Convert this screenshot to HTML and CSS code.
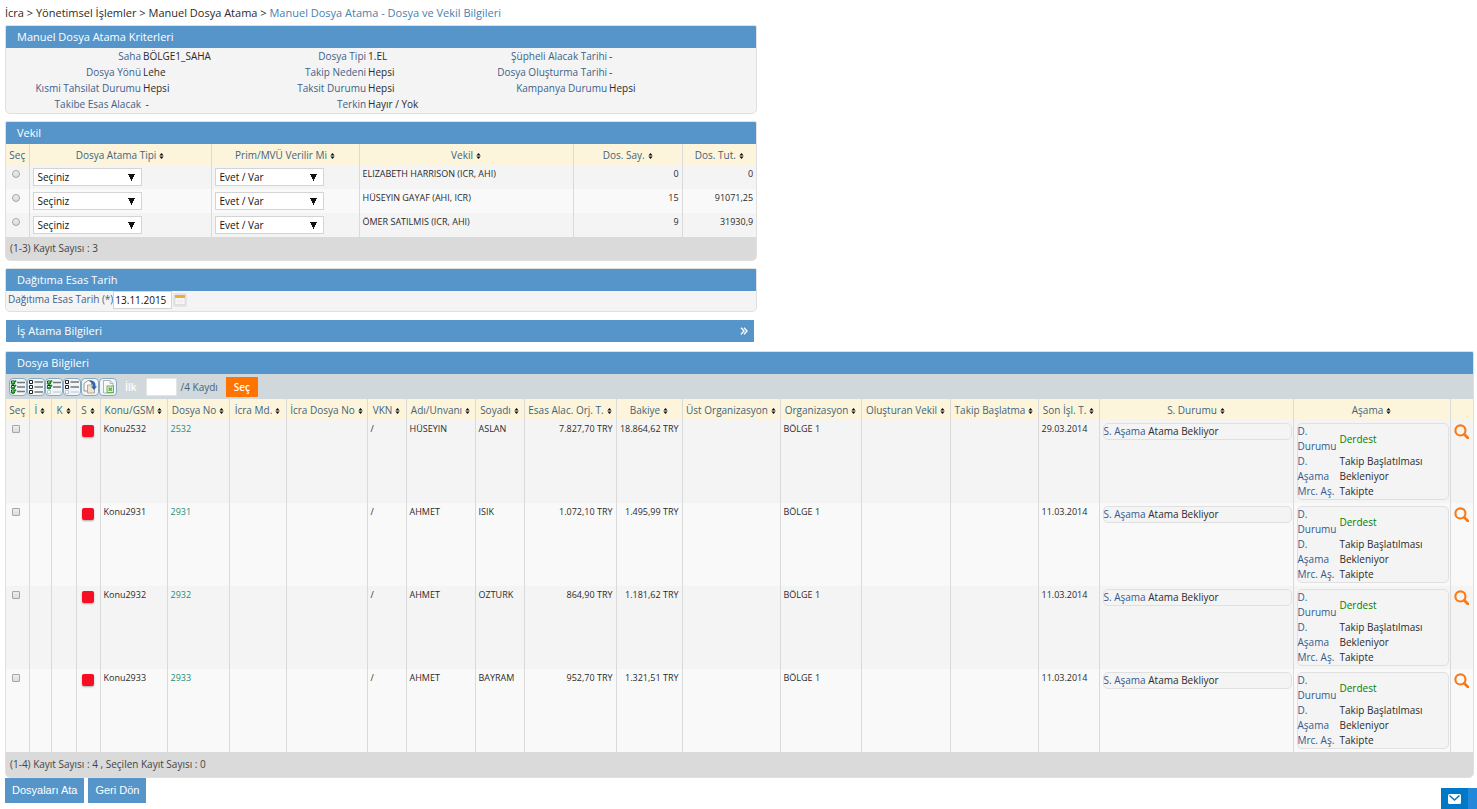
FILE: index.html
```html
<!DOCTYPE html>
<html lang="tr">
<head>
<meta charset="utf-8">
<title>Manuel Dosya Atama</title>
<link rel="stylesheet" href="styles.css">
</head>
<body>
<svg class="sprites" aria-hidden="true">
  <symbol id="sort" viewBox="0 0 5 7"><path d="M2.500 0L5 3H0zM2.500 7L0 4h5z"/></symbol>
  <symbol id="search" viewBox="0 0 14 14"><circle cx="6" cy="6" r="4.700" fill="none" stroke="#f97a16" stroke-width="2"/><path d="M9.500 9.500l3.500 3.500" stroke="#f97a16" stroke-width="2.600" stroke-linecap="round"/></symbol>
</svg>

<nav class="breadcrumb"><a href="#">İcra</a> &gt; <a href="#">Yönetimsel İşlemler</a> &gt; <a href="#">Manuel Dosya Atama</a> &gt; <a href="#" class="current">Manuel Dosya Atama - Dosya ve Vekil Bilgileri</a></nav>

<main>
<section class="panel narrow">
  <h2>Manuel Dosya Atama Kriterleri</h2>
  <dl class="criteria">
    <dt>Saha</dt><dd>BÖLGE1_SAHA</dd><dt>Dosya Tipi</dt><dd>1.EL</dd><dt>Şüpheli Alacak Tarihi</dt><dd>-</dd>
    <dt>Dosya Yönü</dt><dd>Lehe</dd><dt>Takip Nedeni</dt><dd>Hepsi</dd><dt>Dosya Oluşturma Tarihi</dt><dd>-</dd>
    <dt>Kısmi Tahsilat Durumu</dt><dd>Hepsi</dd><dt>Taksit Durumu</dt><dd>Hepsi</dd><dt>Kampanya Durumu</dt><dd>Hepsi</dd>
    <dt>Takibe Esas Alacak</dt><dd>&nbsp;-</dd><dt>Terkin</dt><dd>Hayır / Yok</dd>
  </dl>
</section>

<section class="panel narrow">
  <h2>Vekil</h2>
  <table class="grid lawyers">
    <colgroup><col class="w-pick"><col class="w-type"><col class="w-bonus"><col><col class="w-count"><col class="w-sum"></colgroup>
    <thead><tr>
      <th>Seç</th>
      <th>Dosya Atama Tipi<svg class="sort"><use href="#sort"/></svg></th>
      <th>Prim/MVÜ Verilir Mi<svg class="sort"><use href="#sort"/></svg></th>
      <th>Vekil<svg class="sort"><use href="#sort"/></svg></th>
      <th>Dos. Say.<svg class="sort"><use href="#sort"/></svg></th>
      <th>Dos. Tut.<svg class="sort"><use href="#sort"/></svg></th>
    </tr></thead>
    <tbody>
      <tr><td class="pick"><input type="radio" name="vekil" aria-label="Elizabeth Harrison"></td>
        <td><select aria-label="Dosya Atama Tipi"><option>Seçiniz</option></select></td>
        <td><select aria-label="Prim/MVÜ Verilir Mi"><option>Evet / Var</option></select></td>
        <td>ELIZABETH HARRISON (ICR, AHI)</td><td class="num">0</td><td class="num">0</td></tr>
      <tr><td class="pick"><input type="radio" name="vekil" aria-label="Hüseyin Gayaf"></td>
        <td><select aria-label="Dosya Atama Tipi"><option>Seçiniz</option></select></td>
        <td><select aria-label="Prim/MVÜ Verilir Mi"><option>Evet / Var</option></select></td>
        <td>HÜSEYIN GAYAF (AHI, ICR)</td><td class="num">15</td><td class="num">91071,25</td></tr>
      <tr><td class="pick"><input type="radio" name="vekil" aria-label="Ömer Satilmis"></td>
        <td><select aria-label="Dosya Atama Tipi"><option>Seçiniz</option></select></td>
        <td><select aria-label="Prim/MVÜ Verilir Mi"><option>Evet / Var</option></select></td>
        <td>ÖMER SATILMIS (ICR, AHI)</td><td class="num">9</td><td class="num">31930,9</td></tr>
    </tbody>
  </table>
  <p class="summary">(1-3) Kayıt Sayısı : 3</p>
</section>

<section class="panel narrow">
  <h2>Dağıtıma Esas Tarih</h2>
  <div class="date-row">
    <label for="tarih">Dağıtıma Esas Tarih (*)</label>
    <input id="tarih" type="text" value="13.11.2015">
    <button type="button" class="calendar" aria-label="Takvim"><svg viewBox="0 0 14 14"><rect x="2" y="2.500" width="10" height="9" fill="#f8f8f8" stroke="#d5d5d5" stroke-width=".6"/><rect x="2" y="2" width="10" height="3" fill="#eeaa3a"/><path d="M5 5.500v5.500M7 5.500v5.500M9 5.500v5.500M2.500 8h9" stroke="#e6e6e6" stroke-width=".6"/></svg></button>
  </div>
</section>

<button type="button" class="collapsed"><span>İş Atama Bilgileri</span><svg viewBox="0 0 8 8"><path d="M1 .8L4 4 1 7.200M4 .8L7 4 4 7.200" fill="none" stroke="#fff" stroke-width="1.300"/></svg></button>

<section class="panel">
  <h2>Dosya Bilgileri</h2>
  <div class="toolbar">
    <div class="tools">
      <button type="button" aria-label="Tümünü seç"><svg viewBox="0 0 16 16"><path d="M1.500 2h3v3h-3zM1.500 6.500h3v3h-3zM1.500 11h3v3h-3z" fill="#fff" stroke="#222"/><path d="M1 3.500l2 1.500 3-3.500M1 8l2 1.500 3-3.500M1 12.500l2 1.500 3-3.500" fill="none" stroke="#0f9a1c" stroke-width="1.800"/><path d="M7 3.500h8M7 8h8M7 12.500h8" stroke="#777" stroke-width="1.600"/></svg></button>
      <button type="button" aria-label="Seçimi kaldır"><svg viewBox="0 0 16 16"><path d="M1.500 1.500h3v3h-3zM1.500 6.500h3v3h-3zM1.500 11.500h3v3h-3z" fill="#fff" stroke="#222"/><path d="M6.500 3h8.500M6.500 8h8.500M6.500 13h8.500" stroke="#777" stroke-width="1.600"/></svg></button>
      <button type="button" aria-label="Sayfayı seç"><svg viewBox="0 0 16 16"><path d="M1.500 2h3v3h-3zM1.500 6.500h3v3h-3z" fill="#fff" stroke="#222"/><path d="M1 3.500l2 1.500 3-3.500M1 8l2 1.500 3-3.500" fill="none" stroke="#0f9a1c" stroke-width="1.800"/><path d="M7 3.500h8M7 8h8" stroke="#777" stroke-width="1.600"/><path d="M1.500 11.500h3v3h-3zM7 13h8" fill="#fff" stroke="#b8c8d8"/></svg></button>
      <button type="button" aria-label="Sayfa seçimini kaldır"><svg viewBox="0 0 16 16"><path d="M1.500 1.500h3v3h-3zM1.500 6.500h3v3h-3z" fill="#fff" stroke="#222"/><path d="M6.500 3h8.500M6.500 8h8.500" stroke="#777" stroke-width="1.600"/><path d="M1.500 11.500h3v3h-3zM6.500 13h8.500" fill="#fff" stroke="#b8c8d8"/></svg></button>
      <button type="button" aria-label="Kopyala"><svg viewBox="0 0 16 16"><path d="M2 4.500l4-3h3.500V12H2z" fill="#fafafa" stroke="#888" stroke-width=".9"/><path d="M5.500 6h7v8h-7z" fill="#f1e3c8" stroke="#999" stroke-width=".8"/><path d="M7 2.500c4-2 7 .500 6.500 5H15l-3 3.500L9 7.500h1.700C11 5 10 3.500 7 2.500z" fill="#2f62b5"/></svg></button>
      <button type="button" aria-label="Excel'e aktar"><svg viewBox="0 0 16 16"><path d="M3.500 1.500h6.500l3 3v9.500H3.500z" fill="#fafafa" stroke="#aaa" stroke-width=".9"/><path d="M10 1.500v3h3" fill="none" stroke="#aaa" stroke-width=".8"/><rect x="7" y="7" width="6.500" height="6.500" fill="#dff0d5" stroke="#6cae55"/><path d="M8.700 8.700l3.200 3.200M11.900 8.700l-3.200 3.200" stroke="#5ba542" stroke-width="1.300"/></svg></button>
    </div>
    <label for="ilk" class="first">İlk</label>
    <input id="ilk" type="text">
    <span>/4 Kaydı</span>
    <button type="button" class="pick-btn">Seç</button>
  </div>
  <table class="grid files">
    <colgroup><col class="w-pick"><col class="w-i"><col class="w-k"><col class="w-s"><col class="w-subject"><col class="w-file"><col class="w-office"><col class="w-officeno"><col class="w-vkn"><col class="w-name"><col class="w-surname"><col class="w-principal"><col class="w-balance"><col class="w-parent"><col class="w-org"><col class="w-creator"><col class="w-start"><col class="w-date"><col><col class="w-stage"><col class="w-view"></colgroup>
    <thead><tr>
      <th>Seç</th>
      <th>İ<svg class="sort"><use href="#sort"/></svg></th>
      <th>K<svg class="sort"><use href="#sort"/></svg></th>
      <th>S<svg class="sort"><use href="#sort"/></svg></th>
      <th>Konu/GSM<svg class="sort"><use href="#sort"/></svg></th>
      <th>Dosya No<svg class="sort"><use href="#sort"/></svg></th>
      <th>İcra Md.<svg class="sort"><use href="#sort"/></svg></th>
      <th>İcra Dosya No<svg class="sort"><use href="#sort"/></svg></th>
      <th>VKN<svg class="sort"><use href="#sort"/></svg></th>
      <th>Adı/Unvanı<svg class="sort"><use href="#sort"/></svg></th>
      <th>Soyadı<svg class="sort"><use href="#sort"/></svg></th>
      <th>Esas Alac. Orj. T.<svg class="sort"><use href="#sort"/></svg></th>
      <th>Bakiye<svg class="sort"><use href="#sort"/></svg></th>
      <th>Üst Organizasyon<svg class="sort"><use href="#sort"/></svg></th>
      <th>Organizasyon<svg class="sort"><use href="#sort"/></svg></th>
      <th>Oluşturan Vekil<svg class="sort"><use href="#sort"/></svg></th>
      <th>Takip Başlatma<svg class="sort"><use href="#sort"/></svg></th>
      <th>Son İşl. T.<svg class="sort"><use href="#sort"/></svg></th>
      <th>S. Durumu<svg class="sort"><use href="#sort"/></svg></th>
      <th>Aşama<svg class="sort"><use href="#sort"/></svg></th>
      <th></th>
    </tr></thead>
    <tbody>
      <tr>
        <td class="pick"><input type="checkbox" aria-label="Dosya 2532"></td><td></td><td></td><td><span class="flag"></span></td>
        <td>Konu2532</td><td><a href="#">2532</a></td><td></td><td></td><td>/</td><td>HÜSEYIN</td><td>ASLAN</td>
        <td class="num">7.827,70 TRY</td><td class="num">18.864,62 TRY</td><td></td><td>BÖLGE 1</td><td></td><td></td><td>29.03.2014</td>
        <td class="boxed"><div class="state"><b>S. Aşama</b> Atama Bekliyor</div></td>
        <td class="boxed"><dl class="stage"><dt>D. Durumu</dt><dd class="ok">Derdest</dd><dt>D. Aşama</dt><dd>Takip Başlatılması Bekleniyor</dd><dt class="short">Mrc. Aş.</dt><dd>Takipte</dd></dl></td>
        <td><button type="button" class="view" aria-label="İncele"><svg><use href="#search"/></svg></button></td>
      </tr>
      <tr>
        <td class="pick"><input type="checkbox" aria-label="Dosya 2931"></td><td></td><td></td><td><span class="flag"></span></td>
        <td>Konu2931</td><td><a href="#">2931</a></td><td></td><td></td><td>/</td><td>AHMET</td><td>ISIK</td>
        <td class="num">1.072,10 TRY</td><td class="num">1.495,99 TRY</td><td></td><td>BÖLGE 1</td><td></td><td></td><td>11.03.2014</td>
        <td class="boxed"><div class="state"><b>S. Aşama</b> Atama Bekliyor</div></td>
        <td class="boxed"><dl class="stage"><dt>D. Durumu</dt><dd class="ok">Derdest</dd><dt>D. Aşama</dt><dd>Takip Başlatılması Bekleniyor</dd><dt class="short">Mrc. Aş.</dt><dd>Takipte</dd></dl></td>
        <td><button type="button" class="view" aria-label="İncele"><svg><use href="#search"/></svg></button></td>
      </tr>
      <tr>
        <td class="pick"><input type="checkbox" aria-label="Dosya 2932"></td><td></td><td></td><td><span class="flag"></span></td>
        <td>Konu2932</td><td><a href="#">2932</a></td><td></td><td></td><td>/</td><td>AHMET</td><td>OZTURK</td>
        <td class="num">864,90 TRY</td><td class="num">1.181,62 TRY</td><td></td><td>BÖLGE 1</td><td></td><td></td><td>11.03.2014</td>
        <td class="boxed"><div class="state"><b>S. Aşama</b> Atama Bekliyor</div></td>
        <td class="boxed"><dl class="stage"><dt>D. Durumu</dt><dd class="ok">Derdest</dd><dt>D. Aşama</dt><dd>Takip Başlatılması Bekleniyor</dd><dt class="short">Mrc. Aş.</dt><dd>Takipte</dd></dl></td>
        <td><button type="button" class="view" aria-label="İncele"><svg><use href="#search"/></svg></button></td>
      </tr>
      <tr>
        <td class="pick"><input type="checkbox" aria-label="Dosya 2933"></td><td></td><td></td><td><span class="flag"></span></td>
        <td>Konu2933</td><td><a href="#">2933</a></td><td></td><td></td><td>/</td><td>AHMET</td><td>BAYRAM</td>
        <td class="num">952,70 TRY</td><td class="num">1.321,51 TRY</td><td></td><td>BÖLGE 1</td><td></td><td></td><td>11.03.2014</td>
        <td class="boxed"><div class="state"><b>S. Aşama</b> Atama Bekliyor</div></td>
        <td class="boxed"><dl class="stage"><dt>D. Durumu</dt><dd class="ok">Derdest</dd><dt>D. Aşama</dt><dd>Takip Başlatılması Bekleniyor</dd><dt class="short">Mrc. Aş.</dt><dd>Takipte</dd></dl></td>
        <td><button type="button" class="view" aria-label="İncele"><svg><use href="#search"/></svg></button></td>
      </tr>
    </tbody>
  </table>
  <p class="summary tall">(1-4) Kayıt Sayısı : 4 , Seçilen Kayıt Sayısı : 0</p>
</section>
</main>

<footer class="actions">
  <button type="button">Dosyaları Ata</button>
  <button type="button">Geri Dön</button>
</footer>

<button type="button" class="chat" aria-label="Mesajlar"><span class="chat-icon"><svg viewBox="0 0 13 10"><rect width="13" height="10" rx="1.500" fill="#fff"/><path d="M1.500 1.500l5 4.500 5-4.500" fill="none" stroke="#0078c8" stroke-width="1.500"/></svg></span></button>
</body>
</html>
```
FILE: styles.css
```css
* { box-sizing: border-box; }
body {
  margin: 0;
  padding: 4px 3px 0 5px;
  background: #fff;
  color: #2b2b2b;
  font: 10px/16px "Open Sans", "Noto Sans", sans-serif;
}
a { color: inherit; text-decoration: none; }
button, input, select { font: inherit; margin: 0; }
button { border: 0; padding: 0; cursor: pointer; }
h2, p, dl, dd { margin: 0; }
.sprites { display: none; }

.breadcrumb { font-size: 11px; line-height: 18px; margin-bottom: 3px; white-space: nowrap; }
.breadcrumb .current { color: #4a7fb0; }

main { display: flex; flex-direction: column; gap: 7px; }
.panel {
  border: 1px solid #e0e0e0;
  border-radius: 2px 2px 5px 5px;
  background: #f4f4f4;
  overflow: hidden;
}
.narrow { width: 51.2%; }
.panel h2, .collapsed {
  background: #5695ca;
  color: #fff;
  font-size: 11px;
  font-weight: 500;
  line-height: 22px;
  padding: 0 11px;
}

.criteria {
  display: grid;
  grid-template-columns: 135fr 85fr 140fr 101fr 140fr 149fr;
  padding-bottom: 1px;
}
.criteria dt { text-align: right; color: #41618a; }
.criteria dd { padding-left: 2px; white-space: nowrap; }

.grid { width: 100%; table-layout: fixed; border-collapse: collapse; }
.grid th {
  height: 21px;
  padding: 0;
  background: #fcf5dc;
  color: #45637a;
  font-weight: 400;
  white-space: nowrap;
}
.grid th + th, .grid td + td { border-left: 1px solid #dadada; }
.sort { width: 5px; height: 6px; margin-left: 3px; fill: #111; }
.grid td { padding: 3px; vertical-align: top; font-size: 9px; line-height: 12px; }
.grid td.boxed { padding-right: 1px; }
.grid tbody tr:nth-child(even) { background: #f9f9f9; }
.grid .num { text-align: right; }
.grid td.pick { text-align: center; padding: 5px 3px 0 0; line-height: 8px; }
.pick input {
  appearance: none;
  display: inline-block;
  width: 8px;
  height: 8px;
  border: 1px solid #a6a6a6;
  border-radius: 1px;
  background: linear-gradient(#eee, #dcdcdc);
}
.pick input[type="radio"] { border-radius: 50%; }
.w-pick { width: 23px; }
.w-type { width: 182px; }
.w-bonus { width: 148px; }
.w-count { width: 109px; }
.w-sum { width: 74px; }
.w-i { width: 22px; }
.w-k { width: 25px; }
.w-s { width: 24px; }
.w-subject { width: 67px; }
.w-file { width: 62px; }
.w-office { width: 57px; }
.w-officeno { width: 81px; }
.w-vkn { width: 39px; }
.w-name { width: 69px; }
.w-surname { width: 49px; }
.w-principal { width: 92px; }
.w-balance { width: 66px; }
.w-parent { width: 98px; }
.w-org { width: 81px; }
.w-creator { width: 89px; }
.w-start { width: 88px; }
.w-date { width: 61px; }
.w-stage { width: 157px; }
.w-view { width: 23px; }

select {
  appearance: none;
  display: block;
  width: 109px;
  height: 18px;
  padding: 0 4px;
  border: 1px solid #d4d4d4;
  border-radius: 0;
  color: #111;
  line-height: 16px;
  background: #fff conic-gradient(from 333deg at 50% 100%, #111 54deg, transparent 54deg) no-repeat right 6px center / 7px 7px;
}
.lawyers select { font-size: 10px; }

.summary { background: #dadada; padding: 3px 4px 4px; line-height: 16px; color: #444; }
.summary.tall { padding: 4px 4px 5px; }

.date-row { display: flex; align-items: flex-start; height: 20px; padding-left: 2px; line-height: 17px; }
.date-row label { color: #41618a; }
.date-row input { width: 59px; height: 18px; padding: 0 1px; border: 1px solid #d4d4d4; color: #111; }
.calendar { width: 14px; height: 14px; margin: 2px 0 0 1px; background: #e4e4e4; border-radius: 2px; }
.calendar svg { display: block; }

.collapsed { display: flex; align-items: center; justify-content: space-between; width: 50.9%; margin: 1px 0 2px 1px; padding-right: 6px; }
.collapsed svg { width: 8px; height: 8px; }

.toolbar { display: flex; align-items: center; height: 25px; padding-left: 3px; background: #d0d8dc; color: #45637a; }
.tools { display: flex; }
.tools button { width: 18px; height: 18px; border: 1px solid #86a9c0; border-radius: 4px; background: #f1f5f8; }
.tools svg { display: block; width: 16px; height: 16px; }
.toolbar .first { margin-left: 8px; color: #fff; font-weight: 600; }
.toolbar input { width: 31px; height: 18px; margin: 0 4px 0 9px; border: 1px solid #e4e4e4; background: #fff; }
.pick-btn { width: 32px; height: 20px; margin-left: 8px; background: #ff7300; color: #fff; font-weight: 600; }

.files a { color: #1c8f76; }
.flag { display: block; width: 12px; height: 12px; margin: 2px 0 0 2px; border-radius: 2px; background: #f50f24; box-shadow: 0 1px 2px #aaa; }
.state { border: 1px solid #e0e0e0; border-radius: 5px; background: #f4f4f4; line-height: 15px; white-space: nowrap; font-size: 10px; }
.state b { font-weight: 400; color: #335a8c; }
.stage {
  display: grid;
  grid-template-columns: 36px 1fr;
  column-gap: 6px;
  align-items: center;
  border: 1px solid #e0e0e0;
  border-radius: 5px;
  background: #f4f4f4;
  font-size: 10px;
  line-height: 15px;
}
.stage dt { color: #335a8c; }
.stage .short { white-space: nowrap; }
.stage dd { padding-right: 20px; }
.stage .ok { color: #008000; }
.view { display: block; width: 15px; height: 15px; margin: 1px 0 0; background: none; }
.view svg { display: block; width: 15px; height: 15px; }

.actions { display: flex; gap: 4px; }
.actions button { height: 25px; padding: 0 7px; background: #5695ca; color: #fff; font: 11px/25px "Liberation Sans", sans-serif; }

.chat { position: fixed; right: 0; bottom: 0; width: 36px; height: 21px; background: #2387da; }
.chat-icon { display: flex; align-items: center; justify-content: center; width: 27px; height: 21px; background: #0078c8; }
.chat-icon svg { width: 13px; height: 10px; }
```
